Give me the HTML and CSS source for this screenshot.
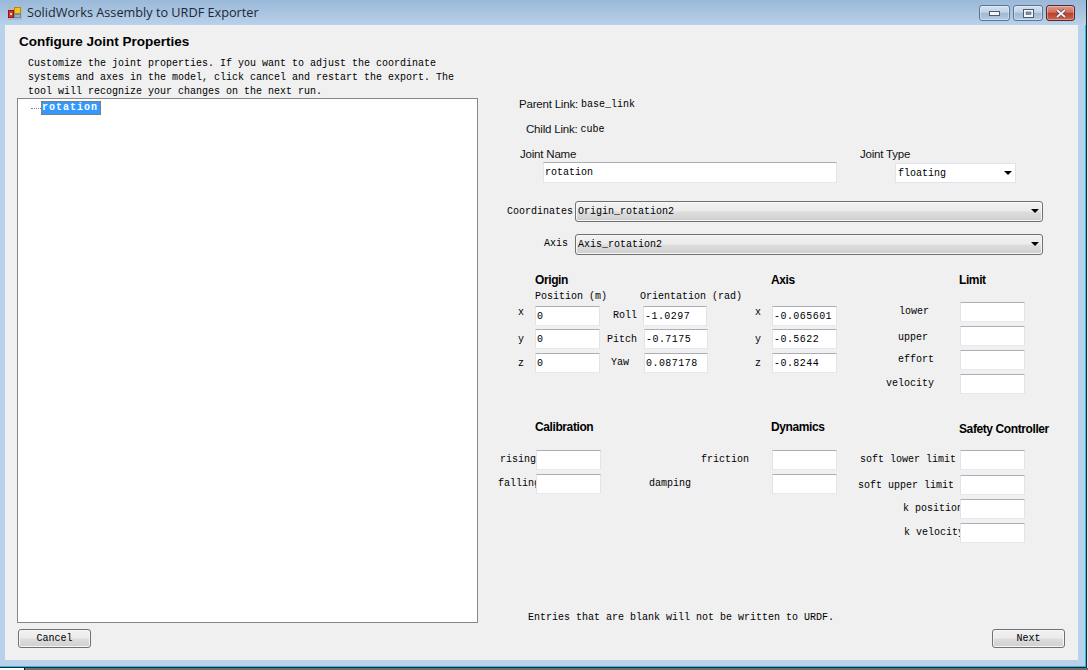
FILE: index.html
```html
<!DOCTYPE html>
<html lang="en">
<head>
<meta charset="utf-8">
<title>SolidWorks Assembly to URDF Exporter</title>
<link rel="stylesheet" href="styles.css">
</head>
<body>
<div class="window">
  <header class="titlebar">
    <svg class="appicon" width="14" height="14" viewBox="0 0 14 14">
      <rect x="0" y="0" width="14" height="14" fill="#a9bccf"/>
      <rect x="6.5" y="1.5" width="6" height="6" fill="#f3c420" stroke="#b98a10" stroke-width="1"/>
      <rect x="6.5" y="8.5" width="6" height="3" fill="#8fb0d8" stroke="#6c87aa" stroke-width="1"/>
      <rect x="0.5" y="4.5" width="5" height="7" fill="#d8302a" stroke="#8c1a18" stroke-width="1"/>
      <rect x="2" y="7" width="2" height="2" fill="#ffd8c8"/>
    </svg>
    <span class="title">SolidWorks Assembly to URDF Exporter</span>
    <div class="controls">
      <button class="wbtn wmin"><svg width="11" height="5" viewBox="0 0 11 5"><rect x="0.5" y="0.5" width="10" height="4" fill="#f4f6f9" stroke="#4a5a70"/></svg></button>
      <button class="wbtn wmax"><svg width="11" height="9" viewBox="0 0 11 9"><rect x="0.5" y="0.5" width="10" height="8" fill="#f4f6f9" stroke="#4a5a70"/><rect x="3" y="3" width="5" height="2.5" fill="#7f93aa" stroke="#4a5a70" stroke-width="0.6"/></svg></button>
      <button class="wbtn wclose"><svg width="12" height="9" viewBox="0 0 12 9"><path d="M2 1L10 8M10 1L2 8" stroke="#5a3a40" stroke-width="3.4" fill="none"/><path d="M2 1L10 8M10 1L2 8" stroke="#f2f2f2" stroke-width="2" fill="none"/></svg></button>
    </div>
  </header>
  <main class="client">
    <section class="left">
      <h1 class="pagehead">Configure Joint Properties</h1>
      <p class="desc">Customize the joint properties. If you want to adjust the coordinate<br>systems and axes in the model, click cancel and restart the export. The<br>tool will recognize your changes on the next run.</p>
      <div class="tree">
        <div class="node"><span class="dots"></span><span class="nodelabel">rotation</span></div>
      </div>
      <button class="btn cancel">Cancel</button>
    </section>
    <section class="right">
      <div class="linkrow parent"><span class="ui">Parent Link:</span><span class="mono">base_link</span></div>
      <div class="linkrow child"><span class="ui">Child Link:</span><span class="mono">cube</span></div>
      <div class="namelabels"><span class="ui">Joint Name</span><span class="ui">Joint Type</span></div>
      <div class="namefields">
        <input class="input jname" value="rotation">
        <div class="jtype"><span class="mono">floating</span><i class="arrow"></i></div>
      </div>
      <div class="comborow coords"><label class="mono">Coordinates</label><div class="combo"><span>Origin_rotation2</span><i class="arrow"></i></div></div>
      <div class="comborow axisrow"><label class="mono">Axis</label><div class="combo"><span>Axis_rotation2</span><i class="arrow"></i></div></div>

      <div class="heads headsTop"><h2>Origin</h2><h2>Axis</h2><h2>Limit</h2></div>
      <div class="sectop">
        <div class="origin">
          <div class="subhead"><span>Position (m)</span><span>Orientation (rad)</span></div>
          <div class="grid-origin">
            <label class="axl">x</label><input class="input num" value="0"><label class="rpy roll">Roll</label><input class="input num shift" value="-1.0297">
            <label class="axl low">y</label><input class="input num" value="0"><label class="rpy pitch">Pitch</label><input class="input num" value="-0.7175">
            <label class="axl low">z</label><input class="input num" value="0"><label class="rpy yaw">Yaw</label><input class="input num" value="0.087178">
          </div>
        </div>
        <div class="axis">
          <label class="axl">x</label><input class="input num" value="-0.065601">
          <label class="axl low">y</label><input class="input num" value="-0.5622">
          <label class="axl low">z</label><input class="input num" value="-0.8244">
        </div>
        <div class="limit">
          <label class="lower">lower</label><input class="input">
          <label class="upper">upper</label><input class="input">
          <label class="effort">effort</label><input class="input">
          <label class="velocity">velocity</label><input class="input">
        </div>
      </div>

      <div class="heads headsBottom"><h2>Calibration</h2><h2>Dynamics</h2><h2 class="safety">Safety Controller</h2></div>
      <div class="secbottom">
        <div class="calib">
          <label class="rising">rising</label><input class="input">
          <label class="falling">falling</label><input class="input">
        </div>
        <div class="dyn">
          <label class="friction">friction</label><input class="input">
          <label class="damping">damping</label><input class="input">
        </div>
        <div class="safe">
          <label class="softl">soft lower limit</label><input class="input">
          <label class="softu">soft upper limit</label><input class="input">
          <label class="kpos">k position</label><input class="input">
          <label class="kvel">k velocity</label><input class="input">
        </div>
      </div>
      <p class="note">Entries that are blank will not be written to URDF.</p>
      <button class="btn next">Next</button>
    </section>
  </main>
</div>
<div class="strip"><span class="stripwhite"></span><span class="stripgray"></span></div>
</body>
</html>
```
FILE: styles.css
```css
* { box-sizing: border-box; }
html, body { margin: 0; padding: 0; }
body {
  width: 1088px; height: 670px; overflow: hidden;
  background: #e6e6e6;
  font: 10px/14px "Liberation Mono", monospace;
  color: #000;
}
.window {
  width: 1087px; height: 668px;
  display: flex; flex-direction: column;
  background: #b9d1ea;
  border-right: 1px solid #1a2a30;
  border-bottom: 1px solid #1a2a30;
  box-shadow: inset -1px -1px 0 #22c3dc;
}
.titlebar {
  height: 25px; flex: none;
  display: flex; align-items: flex-start;
  background: linear-gradient(#9ab8d8, #b9d1ea);
}
.appicon { margin: 6px 0 0 8px; flex: none; }
.title {
  margin: 4px 0 0 5px;
  font: 12.7px/17px "Open Sans", sans-serif;
  color: #1c2836;
}
.controls { margin: 5px 0 0 auto; padding-right: 11px; display: flex; gap: 3px; }
.wbtn {
  height: 16px; width: 31px; padding: 0; margin: 0;
  display: flex; align-items: center; justify-content: center;
  border: 1px solid #5c7594; border-radius: 3px;
  background: linear-gradient(#d3e1ef 0, #c0d3e6 45%, #9fb9d4 50%, #b4cbe2 100%);
  box-shadow: inset 0 0 0 1px rgba(255,255,255,.35);
}
.wmax { width: 30px; }
.wclose {
  width: 29px; border-color: #5f2230;
  background: linear-gradient(#dc9a8c 0, #d3705c 45%, #bb3f2c 50%, #c9684f 100%);
}
.client {
  margin-left: 5px; width: 1073px; height: 635px;
  background: #f0f0f0;
  display: grid; grid-template-columns: 485px 588px;
}
.left { display: flex; flex-direction: column; align-items: flex-start; padding-top: 9px; }
.pagehead {
  margin: 0 0 0 14px;
  font: bold 13.5px/16px "Liberation Sans", sans-serif;
}
.desc { margin: 7px 0 0 23px; white-space: nowrap; }
.tree {
  margin: -1px 0 0 12px; width: 461px; height: 525px;
  background: #fff; border: 1px solid #828790;
}
.node { display: flex; align-items: center; margin: 2px 0 0 13px; }
.dots { width: 10px; border-top: 1px dotted #808080; }
.nodelabel {
  height: 14px; width: 60px; padding-left: 1px;
  background: #3399ff; color: #fff;
  outline: 1px dotted #b06a20; outline-offset: -1px;
  font-weight: bold; letter-spacing: 1px; line-height: 13px;
}
.btn {
  width: 73px; height: 19px; padding: 0;
  font: 10px/14px "Liberation Mono", monospace; color: #000;
  border: 1px solid #707070; border-radius: 3px;
  background: linear-gradient(#f2f2f2 0, #ebebeb 48%, #dddddd 52%, #cfcfcf 100%);
  box-shadow: inset 0 0 0 1px #f6f6f6;
}
.cancel { margin: 6px 0 0 13px; }
.right { display: flex; flex-direction: column; align-items: flex-start; padding-top: 72px; }
.ui { font: 11.5px/14px "Liberation Sans", sans-serif; letter-spacing: -.2px; color: #111; }
.mono { font: 10px/14px "Liberation Mono", monospace; }
.linkrow { display: flex; gap: 3px; height: 14px; }
.linkrow .mono { padding-top: 1px; }
.parent { margin-left: 29px; }
.child { margin: 11px 0 0 36px; }
.namelabels { margin: 11px 0 0 30px; display: grid; grid-template-columns: 340px auto; }
.namefields { margin-top: 1px; display: flex; align-items: flex-start; }
.input {
  display: block; width: 65px; height: 20px; margin: 0; padding: 0 0 0 1px;
  font: 10px/14px "Liberation Mono", monospace; color: #000;
  background: #fff; outline: none;
  border: 1px solid; border-color: #abadb3 #e2e3ea #e3e9ef #e2e3ea;
  border-radius: 1px;
}
.num { letter-spacing: .45px; }
.jname { margin-left: 53px; width: 294px; height: 21px; }
.jtype {
  margin: 1px 0 0 58px; width: 121px; height: 20px; position: relative;
  padding: 1px 0 0 2px; line-height: 18px;
  background: #fff; border: 1px solid #e2e3ea;
  display: flex; align-items: center;
}
.arrow {
  position: absolute; right: 3px; top: 7px; width: 0; height: 0;
  border-left: 4px solid transparent; border-right: 4px solid transparent;
  border-top: 4px solid #000;
}
.comborow { display: flex; align-items: center; }
.coords { margin: 18px 0 0 17px; }
.coords label { width: 68px; }
.axisrow { margin: 12px 0 0 54px; }
.axisrow label { width: 31px; margin-top: -2px; }
.combo {
  width: 468px; height: 21px; position: relative;
  display: flex; align-items: center; padding: 0 0 0 2px;
  border: 1px solid #707070; border-radius: 3px;
  background: linear-gradient(#f2f2f2 0, #ebebeb 48%, #dddddd 52%, #cfcfcf 100%);
  box-shadow: inset 0 0 0 1px #f6f6f6;
}
.heads {
  margin-left: 45px; display: grid;
  grid-template-columns: 236px 188px auto;
  align-items: start;
}
.heads h2 {
  margin: 0; font: bold 12px/16px "Liberation Sans", sans-serif; letter-spacing: -.4px;
}
.headsTop { margin-top: 17px; }
.headsBottom { margin-top: 25px; height: 16px; }
.heads .safety { margin-top: 2px; }
.sectop { display: flex; align-items: flex-start; margin-top: 1px; }
.origin { width: 255px; }
.subhead { padding: 1px 0 0 45px; display: grid; grid-template-columns: 105px auto; height: 17px; }
.grid-origin {
  display: grid; grid-template-columns: 45px 65px 44px 64px;
  grid-template-rows: 23px 24px 20px;
}
.grid-origin .input { width: 100%; }
.grid-origin .shift { margin-left: -1px; }
.axl { padding-left: 28px; }
.low { margin-top: 4px; }
.rpy { white-space: nowrap; }
.roll { padding-left: 13px; margin-top: 3px; }
.pitch { padding-left: 7px; margin-top: 4px; }
.yaw { padding-left: 11px; margin-top: 3px; }
.axis {
  display: grid; grid-template-columns: 27px 65px;
  grid-template-rows: 23px 24px 20px;
  margin-top: 17px;
}
.axis .axl { padding-left: 10px; }
.limit {
  display: grid; grid-template-columns: 123px 65px;
  grid-template-rows: 24px 24px 24px 20px;
  margin-top: 13px;
}
.limit label { margin-top: 3px; white-space: nowrap; }
.limit .upper { margin-top: 5px; padding-left: 61px; }
.lower { padding-left: 62px; }
.effort { padding-left: 61px; }
.velocity { padding-left: 49px; }
.secbottom { display: flex; align-items: flex-start; margin-top: 15px; }
.calib, .dyn { display: grid; grid-template-rows: 24px 24px; }
.calib { grid-template-columns: 46px 65px; }
.dyn { grid-template-columns: 171px 65px; }
.safe { display: grid; grid-template-columns: 123px 65px; grid-template-rows: 25px 24px 24px 20px; }
.calib label, .dyn label, .safe label { white-space: nowrap; overflow: hidden; margin-top: 3px; height: 16px; }
.rising { padding-left: 10px; }
.falling { padding-left: 8px; }
.friction { padding-left: 100px; }
.damping { padding-left: 48px; }
.softl { padding-left: 23px; }
.safe .softu { padding-left: 21px; margin-top: 4px; }
.kpos { padding-left: 66px; }
.kvel { padding-left: 67px; }
.note { margin: 68px 0 0 38px; white-space: nowrap; }
.next { margin: 4px 0 0 502px; }
.strip { display: flex; height: 2px; }
.stripwhite { width: 25px; background: #fff; border-right: 1px solid #111; }
.stripgray { flex: 1; background: #6e6e6e; }
```
